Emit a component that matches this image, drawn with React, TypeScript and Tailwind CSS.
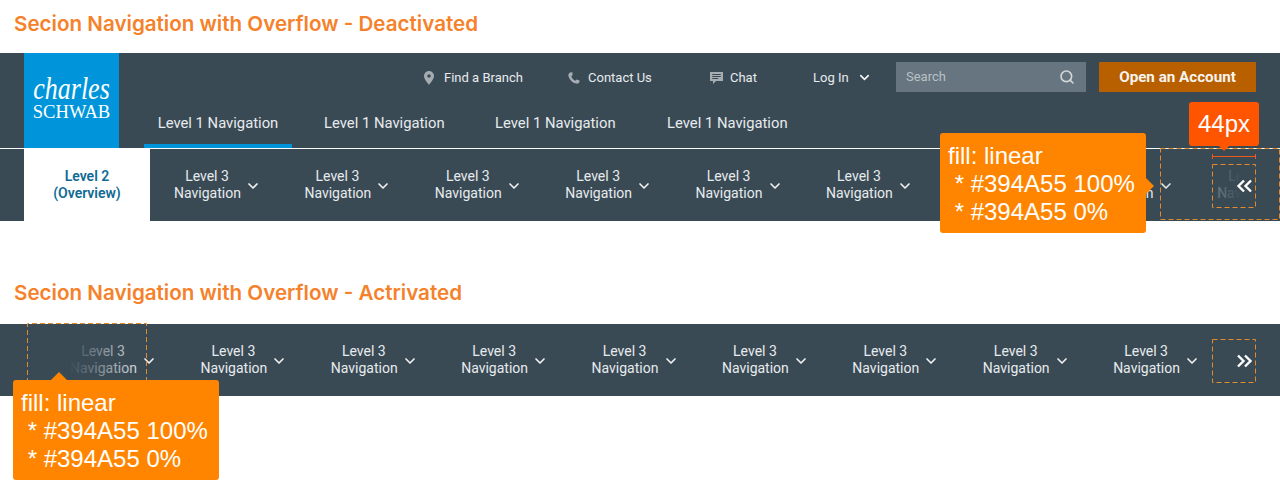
import React from "react";
import { ChevronDown, Search } from "lucide-react";

const thirdLevel = Array.from({ length: 9 });

const NavItem: React.FC = () => (
  <div className="flex w-[130.4px] shrink-0 items-center pl-[24px]">
    <div className="w-[66px] shrink-0 text-center text-[14px] leading-[17px] text-[#e8ebed]">
      Level 3
      <br />
      Navigation
    </div>
    <ChevronDown className="ml-[5px] mt-[1px] shrink-0 text-[#f2f2f2]" size={16} strokeWidth={2.5} />
  </div>
);

const Callout: React.FC<{ className: string }> = ({ className }) => (
  <div
    className={`absolute h-[100px] w-[206px] rounded-[3px] bg-[#ff8500] px-[8px] pt-[9px] text-[24px] leading-[28px] whitespace-pre text-white [font-family:'Liberation_Sans',sans-serif] ${className}`}
  >
    {"fill: linear\n * #394A55 100%\n * #394A55 0%"}
  </div>
);

// dashed spec outline, svg because css dashes are too short
const DashedBox: React.FC<{ className: string; w: number; h: number; open?: boolean }> = ({ className, w, h, open }) => (
  <svg className={`absolute ${className}`} width={w} height={h} fill="none">
    <path
      d={open ? `M0.5 ${h}V0.5H${w - 0.5}V${h}` : `M0.5 0.5H${w - 0.5}V${h - 0.5}H0.5Z`}
      stroke="#e48a2c"
      strokeDasharray="5 3"
    />
  </svg>
);

const PinIcon = () => (
  <svg width="10" height="14" viewBox="0 0 10 14" className="shrink-0">
    <path
      fillRule="evenodd"
      d="M5 0a5 5 0 0 1 5 5c0 3-3.4 6.6-5 9C3.4 11.6 0 8 0 5a5 5 0 0 1 5-5zm0 3.2a1.8 1.8 0 1 0 0 3.6 1.8 1.8 0 0 0 0-3.6z"
      fill="#a5adb3"
    />
  </svg>
);

const PhoneIcon = () => (
  <svg width="12" height="12" viewBox="0 0 12 12" className="shrink-0">
    <path
      d="M2.8 0.2 4.6 0.6 4.4 3.6 3.3 4.2C3.7 6 5.4 8 7.6 8.8L8.6 7.6 11.6 8.6 11.2 10.6C10.8 11.5 9.6 11.9 8.4 11.6 4.6 10.8 1.4 7.6 0.4 3.9 0 2.2 1.2 0.6 2.8 0.2z"
      fill="#a5adb3"
    />
  </svg>
);

const ChatIcon = () => (
  <svg width="13" height="12" viewBox="0 0 13 12" className="shrink-0">
    <path
      fillRule="evenodd"
      d="M0 0h13v9H6l-3 3V9H0zM2.2 2v1h8.6V2zm0 2v1h8.6V4zm0 2v1h6V6z"
      fill="#a5adb3"
    />
  </svg>
);

const DoubleChevron: React.FC<{ className: string; left?: boolean }> = ({ className, left }) => (
  <svg className={`absolute ${className}`} width="17" height="14" viewBox="0 0 17 14" fill="none">
    <path
      d={left ? "M8 1.5 2.5 7 8 12.5M15 1.5 9.5 7 15 12.5" : "M2 1.5 7.5 7 2 12.5M9 1.5 14.5 7 9 12.5"}
      stroke="#fff"
      strokeWidth="2.4"
    />
  </svg>
);

const App: React.FC = () => {
  return (
    <div className="relative h-[494px] w-[1280px] overflow-hidden bg-white [font-family:Roboto,sans-serif]">
      <div className="flex h-[53px] items-start pl-[14px] pt-[9px] text-[20.6px] leading-[30px] font-semibold text-[#f5822b] [font-family:Inter,sans-serif]">
        Secion Navigation with Overflow - Deactivated
      </div>

      <div className="flex h-[95px] bg-[#394a55] pl-[24px]">
        <div className="flex h-[95px] w-[95px] shrink-0 flex-col items-center bg-[#0095da] pt-[25px] text-white [font-family:'Liberation_Serif',serif]">
          <div className="origin-bottom scale-y-[1.2] text-[26px] leading-[28px] italic">charles</div>
          <div className="mt-[-3px] text-[18.6px] leading-[18px]">SCHWAB</div>
        </div>
        <div className="flex flex-1 flex-col">
          <div className="flex h-[48px] items-center pt-[1px] text-[13px] text-[#e8ebed]">
            <div className="ml-[305px] flex w-[144px] items-center gap-[10px]">
              <PinIcon />
              Find a Branch
            </div>
            <div className="flex w-[142px] items-center gap-[8px]">
              <PhoneIcon />
              Contact Us
            </div>
            <div className="flex w-[103px] items-center gap-[7px]">
              <ChatIcon />
              Chat
            </div>
            <div className="flex w-[83px] items-center">
              Log In
              <ChevronDown className="ml-[8px] text-[#f2f2f2]" size={15} strokeWidth={2.6} />
            </div>
            <div className="mt-[-1px] flex h-[30px] w-[190px] items-center justify-between bg-[#66757f] pl-[10px] pr-[11px] text-[#b9c1c6]">
              Search
              <Search size={16} strokeWidth={2.4} className="text-[#d3d8db]" />
            </div>
            <div className="ml-[13px] mt-[-1px] flex h-[30px] w-[157px] items-center justify-center bg-[#b85f00] text-[15.2px] font-bold text-[#f8f3ee]">
              Open an Account
            </div>
          </div>
          <div className="ml-[25px] flex h-[47px] text-[14.8px] text-[#e8ebed]">
            <div className="flex w-[167px] flex-col">
              <div className="flex h-[43px] w-[148px] items-center justify-center pt-[2px]">Level 1 Navigation</div>
              <div className="h-[4px] w-[148px] bg-[#0095da]" />
            </div>
            <div className="flex h-[43px] w-[171px] items-center pl-[13px] pt-[2px]">Level 1 Navigation</div>
            <div className="flex h-[43px] w-[172px] items-center pl-[13px] pt-[2px]">Level 1 Navigation</div>
            <div className="flex h-[43px] items-center pl-[13px] pt-[2px]">Level 1 Navigation</div>
          </div>
        </div>
      </div>

      <div className="h-[1px] bg-white" />

      <div className="flex h-[72px] overflow-hidden bg-[#394a55] pl-[24px]">
        <div className="flex w-[126px] shrink-0 items-center justify-center bg-white text-center text-[14px] leading-[17px] font-semibold text-[#0f6a94]">
          Level 2
          <br />
          (Overview)
        </div>
        {thirdLevel.map((_, i) => (
          <NavItem key={i} />
        ))}
      </div>

      <div className="flex h-[103px] items-end pb-[16px] pl-[14px] text-[20.6px] leading-[30px] font-semibold text-[#f5822b] [font-family:Inter,sans-serif]">
        Secion Navigation with Overflow - Actrivated
      </div>

      <div className="flex h-[72px] overflow-hidden bg-[#394a55] pl-[46px]">
        {thirdLevel.map((_, i) => (
          <NavItem key={i} />
        ))}
      </div>

      {/* fades over the nav rows */}
      <div className="absolute left-[1160px] top-[149px] h-[72px] w-[120px] bg-gradient-to-r from-[#394a55]/0 to-[#394a55] to-[68%]" />
      <div className="absolute left-[27px] top-[324px] h-[72px] w-[120px] bg-gradient-to-r from-[#394a55] from-[35%] to-[#394a55]/0" />

      {/* overflow arrows */}
      <DoubleChevron left className="left-[1236px] top-[179px]" />
      <DoubleChevron className="left-[1236px] top-[354px]" />

      {/* spec annotations */}
      <DashedBox className="left-[1160px] top-[148px]" w={120} h={72} />
      <DashedBox className="left-[1212px] top-[164px]" w={44} h={44} />
      <DashedBox className="left-[1212px] top-[339px]" w={44} h={44} />
      <DashedBox className="left-[27px] top-[323px]" w={120} h={60} open />

      <div className="absolute left-[1212px] top-[154px] h-[5px] w-[44px] border-x border-[#ee5a1e]">
        <div className="mt-[2px] h-[1px] bg-[#ee5a1e]" />
      </div>
      <div className="absolute left-[1189px] top-[102px] flex h-[44px] w-[70px] items-center justify-center rounded-[3px] bg-[#ff5500] text-[24px] text-white [font-family:'Liberation_Sans',sans-serif]">
        44px
      </div>
      <div className="absolute left-[1219px] top-[146px] h-0 w-0 border-x-[5px] border-t-[5px] border-x-transparent border-t-[#ff5500]" />

      <Callout className="left-[940px] top-[133px]" />
      <div className="absolute left-[1146px] top-[178px] h-0 w-0 border-y-[8px] border-l-[8px] border-y-transparent border-l-[#ff8500]" />

      <Callout className="left-[13px] top-[380px]" />
      <div className="absolute left-[51px] top-[372px] h-0 w-0 border-x-[8px] border-b-[8px] border-x-transparent border-b-[#ff8500]" />
    </div>
  );
};

export default App;
